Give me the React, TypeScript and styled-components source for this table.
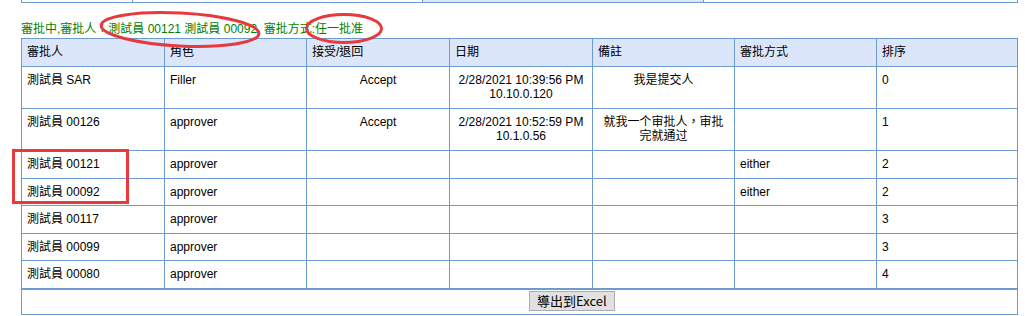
import React from "react";
import styled, { createGlobalStyle } from "styled-components";

const BORDER = "#6b9bd1";
const HEAD_BG = "#dbe6fb";

const Global = createGlobalStyle`
  html, body { margin: 0; padding: 0; background: #fff; }
  body {
    font-family: "Liberation Sans", Arial, "Noto Sans CJK TC", sans-serif;
    font-size: 12px;
    color: #000;
  }
`;

const Page = styled.div`
  position: relative;
  width: 1025px;
  height: 316px;
  padding-left: 21px;
  box-sizing: border-box;
  overflow: hidden;
`;

const TopStrip = styled.div`
  display: grid;
  grid-template-columns: 111px 290px 281px 314px;
  width: 997px;
  border-right: 1px solid ${BORDER};
  box-sizing: border-box;
`;

const StripCell = styled.div<{ $shade?: boolean }>`
  height: 2px;
  border-left: 1px solid ${BORDER};
  border-bottom: 1px solid ${BORDER};
  background: ${(p) => (p.$shade ? HEAD_BG : "#fff")};
`;

const Status = styled.div`
  padding: 19px 0 1px;
  line-height: 15px;
  height: 15px;
  color: #008000;
  white-space: nowrap;
`;

const Table = styled.table`
  width: 997px;
  border-collapse: collapse;
  table-layout: fixed;
  border: 1px solid ${BORDER};
`;

const Th = styled.th`
  background: ${HEAD_BG};
  border: 1px solid ${BORDER};
  padding: 6px 5px;
  line-height: 14.6px;
  font-weight: normal;
  text-align: left;
  vertical-align: middle;
`;

const Td = styled.td<{ $center?: boolean }>`
  border: 1px solid ${BORDER};
  padding: 6px 5px;
  line-height: 14.6px;
  text-align: ${(p) => (p.$center ? "center" : "left")};
  vertical-align: top;
`;

const Footer = styled.div`
  width: 997px;
  height: 26px;
  box-sizing: border-box;
  border: 1px solid ${BORDER};
  padding: 1px 0 3px 507px;
`;

const ExportButton = styled.button`
  height: 20px;
  padding: 0 7px;
  margin: 0;
  background: #e1e1e1;
  border: 1px solid #adadad;
  border-radius: 0;
  font-family: "Noto Sans CJK TC", "Liberation Sans", sans-serif;
  font-size: 13px;
  line-height: 16px;
  color: #000;
`;

const Overlay = styled.svg`
  position: absolute;
  left: 0;
  top: 0;
  pointer-events: none;
`;

type Row = {
  name: string;
  role: string;
  accept?: string;
  date?: React.ReactNode;
  note?: React.ReactNode;
  mode?: string;
  order: string;
};

const rows: Row[] = [
  {
    name: "測試員 SAR",
    role: "Filler",
    accept: "Accept",
    date: (
      <>
        2/28/2021 10:39:56 PM
        <br />
        10.10.0.120
      </>
    ),
    note: "我是提交人",
    order: "0",
  },
  {
    name: "測試員 00126",
    role: "approver",
    accept: "Accept",
    date: (
      <>
        2/28/2021 10:52:59 PM
        <br />
        10.1.0.56
      </>
    ),
    note: "就我一个审批人，审批完就通过",
    order: "1",
  },
  { name: "測試員 00121", role: "approver", mode: "either", order: "2" },
  { name: "測試員 00092", role: "approver", mode: "either", order: "2" },
  { name: "測試員 00117", role: "approver", order: "3" },
  { name: "測試員 00099", role: "approver", order: "3" },
  { name: "測試員 00080", role: "approver", order: "4" },
];

const widths = [143, 142, 143, 143, 142, 142, 141];
const headers = ["審批人", "角色", "接受/退回", "日期", "備註", "審批方式", "排序"];

export default function App() {
  return (
    <>
      <Global />
      <Page>
        <TopStrip>
          <StripCell />
          <StripCell />
          <StripCell $shade />
          <StripCell />
        </TopStrip>
        <Status>審批中,審批人：測試員 00121 測試員 00092, 審批方式:任一批准</Status>
        <Table>
          <colgroup>
            {widths.map((w, i) => (
              <col key={i} style={{ width: w }} />
            ))}
          </colgroup>
          <thead>
            <tr>
              {headers.map((h) => (
                <Th key={h}>{h}</Th>
              ))}
            </tr>
          </thead>
          <tbody>
            {rows.map((r, i) => (
              <tr key={i}>
                <Td>{r.name}</Td>
                <Td>{r.role}</Td>
                <Td $center>{r.accept}</Td>
                <Td $center>{r.date}</Td>
                <Td $center>{r.note}</Td>
                <Td>{r.mode}</Td>
                <Td>{r.order}</Td>
              </tr>
            ))}
          </tbody>
        </Table>
        <Footer>
          <ExportButton type="button">導出到Excel</ExportButton>
        </Footer>
        <Overlay width="1025" height="316" viewBox="0 0 1025 316">
          <ellipse
            cx="180"
            cy="29.5"
            rx="79"
            ry="16.5"
            fill="none"
            stroke="#e8393c"
            strokeWidth="3"
            transform="rotate(3 180 29.5)"
          />
          <ellipse cx="344" cy="28.5" rx="37.5" ry="14" fill="none" stroke="#e8393c" strokeWidth="3" />
          <rect x="13.5" y="150.5" width="114" height="52" fill="none" stroke="#e8393c" strokeWidth="3" />
        </Overlay>
      </Page>
    </>
  );
}
